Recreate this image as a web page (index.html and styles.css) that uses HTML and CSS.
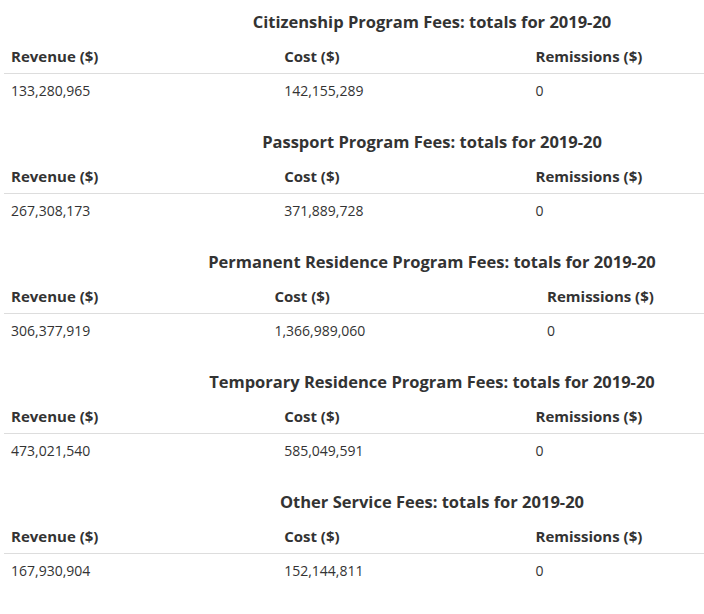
FILE: index.html
```html
<!DOCTYPE html>
<html>
<head>
<meta charset="utf-8">
<link rel="stylesheet" href="styles.css">
</head>
<body>
<div class="page">
<table class="fees">
<caption>Citizenship Program Fees: totals for 2019-20</caption>
<thead><tr><th>Revenue ($)</th><th>Cost ($)</th><th>Remissions ($)</th></tr></thead>
<tbody><tr><td>133,280,965</td><td>142,155,289</td><td>0</td></tr></tbody>
</table>
<table class="fees">
<caption>Passport Program Fees: totals for 2019-20</caption>
<thead><tr><th>Revenue ($)</th><th>Cost ($)</th><th>Remissions ($)</th></tr></thead>
<tbody><tr><td>267,308,173</td><td>371,889,728</td><td>0</td></tr></tbody>
</table>
<table class="fees">
<caption>Permanent Residence Program Fees: totals for 2019-20</caption>
<thead><tr><th>Revenue ($)</th><th>Cost ($)</th><th>Remissions ($)</th></tr></thead>
<tbody><tr><td>306,377,919</td><td>1,366,989,060</td><td>0</td></tr></tbody>
</table>
<table class="fees">
<caption>Temporary Residence Program Fees: totals for 2019-20</caption>
<thead><tr><th>Revenue ($)</th><th>Cost ($)</th><th>Remissions ($)</th></tr></thead>
<tbody><tr><td>473,021,540</td><td>585,049,591</td><td>0</td></tr></tbody>
</table>
<table class="fees">
<caption>Other Service Fees: totals for 2019-20</caption>
<thead><tr><th>Revenue ($)</th><th>Cost ($)</th><th>Remissions ($)</th></tr></thead>
<tbody><tr><td>167,930,904</td><td>152,144,811</td><td>0</td></tr></tbody>
</table>
</div>
</body>
</html>
```
FILE: styles.css
```css
html, body {
  margin: 0;
  padding: 0;
  background: #fff;
  overflow: hidden;
}
body {
  font-family: "Open Sans", "Noto Sans", sans-serif;
  font-size: 15px;
  line-height: 21px;
  color: #333;
}
.page {
  padding: 10px 0 0 4px;
  overflow: hidden;
}
.fees {
  width: 850px;
  border-collapse: collapse;
  margin-bottom: 24px;
}
.fees caption {
  font-size: 16.5px;
  font-weight: 700;
  line-height: 24px;
  text-align: center;
  padding: 0 0 6px 6px;
}
.fees th,
.fees td {
  text-align: left;
  padding: 6px 7px;
  vertical-align: top;
}
.fees td {
  font-size: 14px;
  padding-top: 6px;
  padding-bottom: 5px;
}
.fees th {
  font-weight: 700;
  border-bottom: 1px solid #ddd;
}
```
